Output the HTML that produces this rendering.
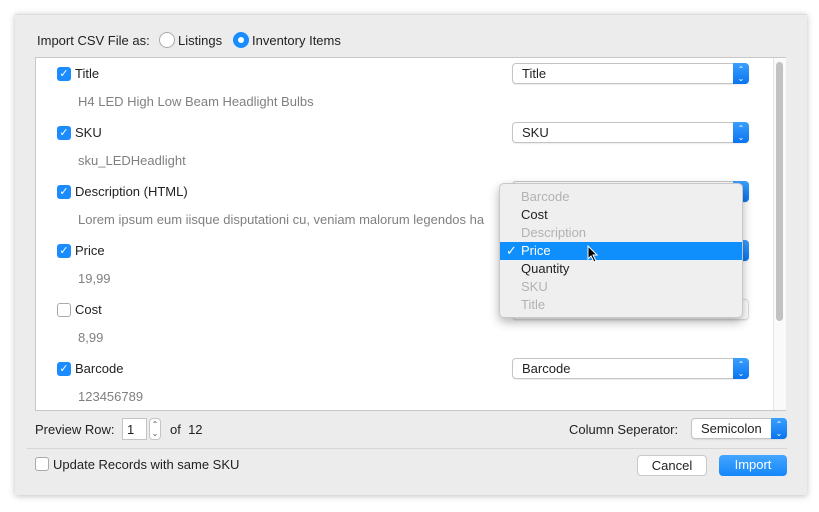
<!DOCTYPE html>
<html><head><style>
*{box-sizing:border-box;margin:0;padding:0}
body{width:819px;height:512px;background:#fff;font-family:"Liberation Sans",sans-serif;font-size:13px;color:#222;position:relative;overflow:hidden}
.win{position:absolute;left:15px;top:14px;width:792px;height:481px;background:#ececec;box-shadow:0 1px 6px rgba(0,0,0,.25);border-top:1px solid #ddd}
.a{position:absolute;white-space:nowrap}
.list{position:absolute;left:35px;top:57px;width:751px;height:354px;background:#fff;border:1px solid #c8c8c8}
.cb{position:absolute;width:14px;height:14px;border-radius:3px;background:#1a8cff;color:#fff;font-size:11px;line-height:14px;text-align:center}
.cb.off{background:#fff;border:1px solid #aaa}
.lab{position:absolute;font-size:13px;color:#222}
.pv{position:absolute;font-size:13px;color:#808080}
.pop{position:absolute;left:512px;width:237px;height:21px;background:#fff;border:1px solid #c4c4c4;border-radius:4px;box-shadow:0 1px 1px rgba(0,0,0,.08);padding-left:9px;line-height:19px;font-size:13px}
.pop .st{position:absolute;right:-1px;top:-1px;width:16px;height:21px;background:linear-gradient(#3aa0ff,#0a74ef);border-radius:0 4px 4px 0;color:#fff;font-size:8px;line-height:9px;text-align:center;padding-top:2px}
.menu{position:absolute;left:499px;top:183px;width:244px;height:135px;background:#efefef;border:1px solid #c8c8c8;border-radius:5px;box-shadow:0 4px 10px rgba(0,0,0,.3);padding-top:4px}
.mi{height:18px;line-height:18px;padding-left:21px;font-size:13px;color:#222}
.mi.d{color:#b2b2b2}
.mi.s{background:#0f8ffb;color:#fff;position:relative}
.btn{position:absolute;height:21px;border-radius:4px;text-align:center;line-height:20px;font-size:13px}
</style></head><body>
<div class="win"></div>
<div class="a" style="left:37px;top:33px">Import CSV File as:</div>
<div class="a" style="left:159px;top:32px;width:16px;height:16px;border-radius:50%;border:1px solid #aaa;background:#fff"></div>
<div class="a" style="left:178px;top:33px">Listings</div>
<div class="a" style="left:233px;top:32px;width:16px;height:16px;border-radius:50%;background:#1a8cff"><div style="position:absolute;left:5px;top:5px;width:6px;height:6px;border-radius:50%;background:#fff"></div></div>
<div class="a" style="left:252px;top:33px">Inventory Items</div>

<div class="list">
<div style="position:absolute;left:737px;top:0;width:13px;height:352px;background:#fafafa;border-left:1px solid #e5e5e5"></div>
<div style="position:absolute;left:740px;top:4px;width:7px;height:259px;border-radius:4px;background:#c2c2c2"></div>
</div>

<div class="cb" style="left:57px;top:67px">✓</div><div class="lab" style="left:75px;top:66px">Title</div><div class="pv" style="left:78px;top:94px">H4 LED High Low Beam Headlight Bulbs</div>
<div class="pop" style="top:63px">Title<div class="st">⌃<br>⌄</div></div>

<div class="cb" style="left:57px;top:126px">✓</div><div class="lab" style="left:75px;top:125px">SKU</div><div class="pv" style="left:78px;top:153px">sku_LEDHeadlight</div>
<div class="pop" style="top:122px">SKU<div class="st">⌃<br>⌄</div></div>

<div class="cb" style="left:57px;top:185px">✓</div><div class="lab" style="left:75px;top:184px">Description (HTML)</div><div class="pv" style="left:78px;top:212px">Lorem ipsum eum iisque disputationi cu, veniam malorum legendos ha</div>
<div class="pop" style="top:181px"><div class="st">⌃<br>⌄</div></div>

<div class="cb" style="left:57px;top:244px">✓</div><div class="lab" style="left:75px;top:243px">Price</div><div class="pv" style="left:78px;top:271px">19,99</div>
<div class="pop" style="top:240px"><div class="st">⌃<br>⌄</div></div>

<div class="cb off" style="left:57px;top:303px"></div><div class="lab" style="left:75px;top:302px">Cost</div><div class="pv" style="left:78px;top:330px">8,99</div>
<div class="pop" style="top:299px;border-color:#ddd"></div>

<div class="cb" style="left:57px;top:362px">✓</div><div class="lab" style="left:75px;top:361px">Barcode</div><div class="pv" style="left:78px;top:389px">123456789</div>
<div class="pop" style="top:358px">Barcode<div class="st">⌃<br>⌄</div></div>

<div class="menu">
<div class="mi d">Barcode</div>
<div class="mi">Cost</div>
<div class="mi d">Description</div>
<div class="mi s"><span style="position:absolute;left:6px">✓</span>Price
<svg style="position:absolute;left:87px;top:3px" width="12" height="18" viewBox="0 0 12 18"><path d="M1 1 L1 14 L4 11 L7 17 L9 16 L6 10 L10 10 Z" fill="#000" stroke="#fff" stroke-width="1"/></svg></div>
<div class="mi">Quantity</div>
<div class="mi d">SKU</div>
<div class="mi d">Title</div>
</div>

<div class="a" style="left:35px;top:422px">Preview Row:</div>
<div class="a" style="left:122px;top:418px;width:25px;height:22px;background:#fff;border:1px solid #c4c4c4;padding:3px 0 0 4px">1</div>
<div class="a" style="left:149px;top:418px;width:12px;height:22px;background:#fff;border:1px solid #c4c4c4;border-radius:4px;font-size:8px;line-height:9px;text-align:center;color:#555;padding-top:1px">⌃<br>⌄</div>
<div class="a" style="left:170px;top:422px">of&nbsp;&nbsp;12</div>
<div class="a" style="left:569px;top:422px">Column Seperator:</div>
<div class="pop" style="left:691px;width:96px;top:418px">Semicolon<div class="st">⌃<br>⌄</div></div>

<div style="position:absolute;left:27px;top:448px;width:760px;height:1px;background:#d6d6d6"></div>
<div class="cb off" style="left:35px;top:457px"></div>
<div class="a" style="left:53px;top:457px">Update Records with same SKU</div>
<div class="btn" style="left:637px;top:455px;width:70px;background:#fff;border:1px solid #c8c8c8">Cancel</div>
<div class="btn" style="left:719px;top:455px;width:68px;background:linear-gradient(#44a6ff,#1487fb);color:#fff">Import</div>
</body></html>
